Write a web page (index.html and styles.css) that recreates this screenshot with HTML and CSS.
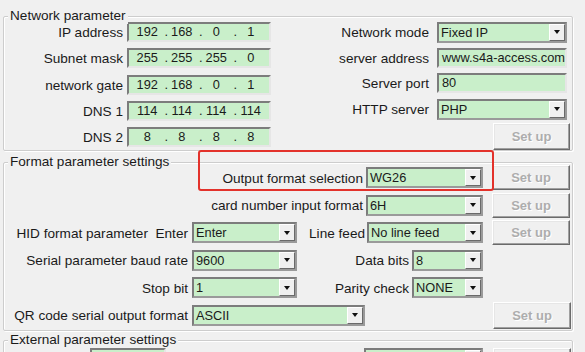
FILE: index.html
```html
<!DOCTYPE html>
<html lang="en">

<head>
    <meta charset="UTF-8" />
    <title>Device parameters</title>
    <link rel="stylesheet" href="styles.css">
</head>

<body>
    <main class="dialog">
        <!-- ========== NETWORK ========== -->
        <section class="group net">
            <span class="group-title">Network parameter</span>
            <div class="net-body">
                <div class="form-grid net-left">
                    <label>IP address</label>
                    <div class="field ip"><span>192</span><i>.</i><span>168</span><i>.</i><span>0</span><i>.</i><span>1</span></div>
                    <label>Subnet mask</label>
                    <div class="field ip"><span>255</span><i>.</i><span>255</span><i>.</i><span>255</span><i>.</i><span>0</span></div>
                    <label>network gate</label>
                    <div class="field ip"><span>192</span><i>.</i><span>168</span><i>.</i><span>0</span><i>.</i><span>1</span></div>
                    <label>DNS 1</label>
                    <div class="field ip"><span>114</span><i>.</i><span>114</span><i>.</i><span>114</span><i>.</i><span>114</span></div>
                    <label>DNS 2</label>
                    <div class="field ip"><span>8</span><i>.</i><span>8</span><i>.</i><span>8</span><i>.</i><span>8</span></div>
                </div>
                <div class="net-right">
                    <div class="form-grid net-fields">
                        <label>Network mode</label>
                        <div class="combo"><span>Fixed IP</span><b class="arrow"></b></div>
                        <label>server address</label>
                        <div class="field">www.s4a-access.com</div>
                        <label>Server port</label>
                        <div class="field">80</div>
                        <label>HTTP server</label>
                        <div class="combo"><span>PHP</span><b class="arrow"></b></div>
                    </div>
                    <button class="btn btn-tall">Set up</button>
                </div>
            </div>
        </section>

        <!-- ========== FORMAT ========== -->
        <section class="group format">
            <span class="group-title">Format parameter settings</span>

            <div class="row">
                <label class="w-wide">Output format selection</label>
                <div class="combo c-mid"><span>WG26</span><b class="arrow"></b></div>
                <button class="btn">Set up</button>
            </div>
            <div class="row">
                <label class="w-wide">card number input format</label>
                <div class="combo c-mid"><span>6H</span><b class="arrow"></b></div>
                <button class="btn">Set up</button>
            </div>
            <div class="row">
                <label class="w-left">HID format parameter&nbsp; Enter</label>
                <div class="combo c-small"><span>Enter</span><b class="arrow"></b></div>
                <label class="w-feed">Line feed</label>
                <div class="combo c-mid c-feed"><span>No line feed</span><b class="arrow"></b></div>
                <button class="btn">Set up</button>
            </div>
            <div class="row">
                <label class="w-left">Serial parameter baud rate</label>
                <div class="combo c-small"><span>9600</span><b class="arrow"></b></div>
                <label class="w-bits">Data bits</label>
                <div class="combo c-tiny"><span>8</span><b class="arrow"></b></div>
            </div>
            <div class="row">
                <label class="w-left">Stop bit</label>
                <div class="combo c-small"><span>1</span><b class="arrow"></b></div>
                <label class="w-bits">Parity check</label>
                <div class="combo c-tiny"><span>NONE</span><b class="arrow"></b></div>
            </div>
            <div class="row">
                <label class="w-left">QR code serial output format</label>
                <div class="combo c-long"><span>ASCII</span><b class="arrow"></b></div>
                <button class="btn btn-tall btn-end">Set up</button>
            </div>
        </section>

        <!-- ========== EXTERNAL ========== -->
        <section class="group external">
            <span class="group-title">External parameter settings</span>
            <div class="row ext-row">
                <div class="field ext-field"></div>
                <div class="combo ext-combo"><span></span><b class="arrow"></b></div>
                <button class="btn btn-end" aria-label="Set up"></button>
            </div>
        </section>
    </main>

    <div class="highlight"></div>
</body>

</html>
```

FILE: styles.css
```css
body {
    margin: 0;
    width: 585px;
    height: 352px;
    overflow: hidden;
    position: relative;
    background: #f0f0f0;
    font-family: "Liberation Sans", Arial, sans-serif;
    font-size: 13.6px;
    color: #1a1a1a;
}

.dialog {
    padding: 16px 0 0 3px;
}

/* group boxes */
.group {
    position: relative;
    width: 570px;
    box-sizing: border-box;
    border: 1px solid #cdcdcd;
    border-radius: 2px;
    box-shadow: inset 1px 1px #fff, 1px 1px #fff;
}

.group-title {
    position: absolute;
    top: -9px;
    left: 4px;
    padding: 0 2px;
    line-height: 16px;
    background: #f0f0f0;
    white-space: nowrap;
}

label {
    text-align: right;
    white-space: nowrap;
    line-height: 16px;
    padding-top: 2px;
}

/* inputs */
.field {
    box-sizing: border-box;
    height: 20px;
    padding: 0 3px;
    line-height: 16px;
    font-size: 12.8px;
    background: #c9efca;
    border: 2px solid;
    border-color: #7c7c7c #e6e6e6 #e6e6e6 #7c7c7c;
    white-space: nowrap;
    overflow: hidden;
}

.ip {
    display: flex;
    padding: 0 1px;
}

.ip span {
    flex: 1;
    text-align: center;
}

.ip i {
    font-style: normal;
    width: 0;
    overflow: visible;
}

.combo {
    box-sizing: border-box;
    display: flex;
    height: 21px;
    background: #c9efca;
    border: 2px solid;
    border-color: #7c7c7c #9a9a9a #9a9a9a #7c7c7c;
    font-size: 12.8px;
    line-height: 17px;
}

.combo span {
    flex: 1;
    padding-left: 2px;
    white-space: nowrap;
    overflow: hidden;
}

.arrow {
    box-sizing: border-box;
    width: 16px;
    display: flex;
    align-items: center;
    justify-content: center;
    background: #f0f0f0;
    border: 1px solid;
    border-color: #fff #6a6a6a #6a6a6a #fff;
}

.arrow::after {
    content: "";
    border-left: 3.5px solid transparent;
    border-right: 3.5px solid transparent;
    border-top: 4px solid #111;
}

.btn {
    box-sizing: border-box;
    width: 78px;
    height: 25px;
    margin-left: 9px;
    padding: 0;
    background: #f0f0f0;
    border: 1px solid;
    border-color: #fff #6a6a6a #6a6a6a #fff;
    box-shadow: inset -1px -1px #a0a0a0, inset 1px 1px #e6e6e6;
    font-family: inherit;
    font-size: 13px;
    font-weight: bold;
    color: #adadad;
    text-shadow: 1px 1px #fff;
}

.btn-tall {
    height: 27px;
}

/* network */
.net {
    height: 135px;
    padding-top: 5px;
}

.net-body {
    display: flex;
    align-items: flex-start;
}

.form-grid {
    display: grid;
    align-items: center;
    grid-auto-rows: 20px;
}

.net-left {
    grid-template-columns: 119px 144px;
    column-gap: 4px;
    row-gap: 6.25px;
}

.net-right {
    width: 299px;
    display: flex;
    flex-direction: column;
}

.net-fields {
    grid-template-columns: 158px 130px;
    column-gap: 8px;
    row-gap: 5.7px;
}

.net-right .btn {
    align-self: flex-end;
    width: 77px;
    margin-top: 4px;
}

/* format */
.format {
    margin-top: 11px;
    height: 169px;
    padding-top: 1px;
}

.row {
    display: flex;
    align-items: center;
    height: 27.5px;
}

.w-wide {
    width: 359px;
}

.w-left {
    width: 184px;
}

.w-feed {
    width: 68px;
}

.w-bits {
    width: 112px;
}

.c-mid {
    width: 117px;
    margin-left: 3px;
}

.c-feed {
    width: 116px;
    margin-left: 2px;
}

.c-small {
    width: 105px;
    margin-left: 4px;
}

.c-tiny {
    width: 71px;
    margin-left: 3px;
}

.c-long {
    width: 173px;
    margin-left: 4px;
}

.btn-end {
    margin-left: auto;
    margin-right: 1px;
}

/* external */
.external {
    margin-top: 9px;
    height: 60px;
    padding-top: 7px;
}

.ext-row {
    align-items: flex-start;
}

.ext-field {
    width: 76px;
    margin-left: 86px;
}

.ext-combo {
    width: 119px;
    margin-left: 198px;
}

/* annotation */
.highlight {
    position: absolute;
    left: 198px;
    top: 150px;
    width: 296px;
    height: 41px;
    box-sizing: border-box;
    border: 2px solid #e3322b;
    border-radius: 3px;
}
```
